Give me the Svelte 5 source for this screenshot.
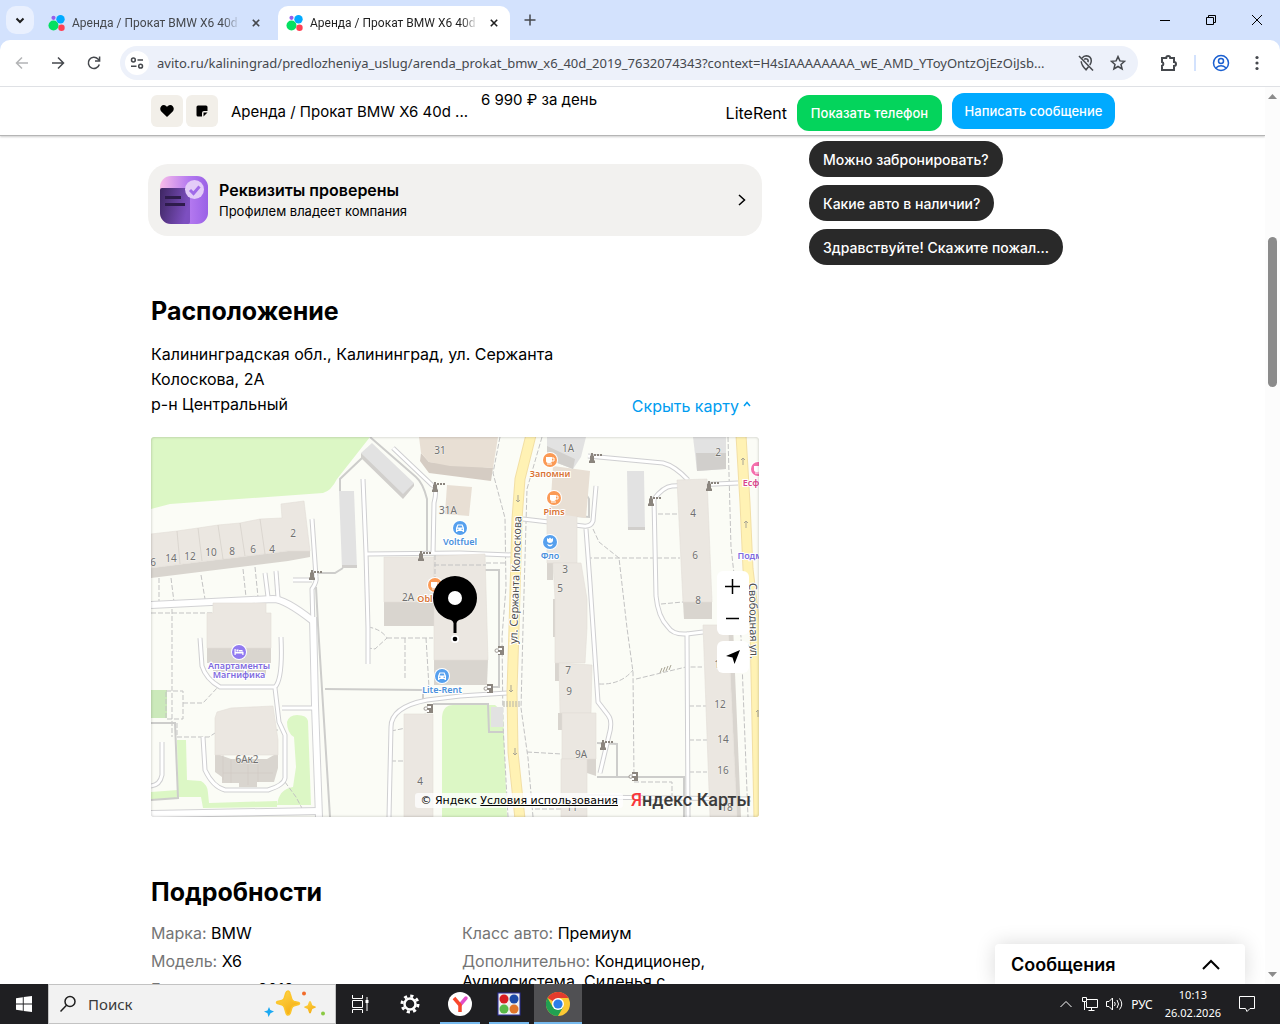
<script lang="ts">
  const tabs = [
    { title: "Аренда / Прокат BMW X6 40d", active: false },
    { title: "Аренда / Прокат BMW X6 40d", active: true },
  ];

  let address = $state(
    "avito.ru/kaliningrad/predlozheniya_uslug/arenda_prokat_bmw_x6_40d_2019_7632074343?context=H4sIAAAAAAAA_wE_AMD_YToyOntzOjEzOiJsb..."
  );

  const questions = ["Можно забронировать?", "Какие авто в наличии?", "Здравствуйте! Скажите пожал..."];

  const details = [
    [
      ["Марка", "BMW"],
      ["Модель", "X6"],
      ["Год выпуска", "2019"],
    ],
    [
      ["Класс авто", "Премиум"],
      ["Дополнительно", "Кондиционер, Аудиосистема, Сиденья с подогревом"],
    ],
  ];

  // All map data below is in the units of the map's viewBox (608 x 380).
  const greens = [
    "M0 0H219L186 42Q180 54 172 56L19 67L0 72Z",
    "M136 285Q138 278 146 278Q156 278 157 284L160 368H126Q128 352 142 350L145 330L143 300Q136 296 136 285Z",
    "M26 303H35L36 343L50 344Q57 348 57 356L58 366L126 364V370L52 371L50 360L28 360V362H0V355L27 353Z",
    "M291 380V280Q292 268 302 268H344L352 275L356 380Z",
  ];

  const roofs = [
    "M0 97L26 94L47 91L67 88L89 86L109 82L131 81L130 67L153 64L159 114H137L0 131Z",
    "M233 120H283V165H233Z",
    "M283 119L334 117L337 223H283Z",
    "M62 166H115V176H120V211H56V176H62Z",
    "M66 275L80 271L122 269L127 303V318H64V281Z",
    "M253 277H282V380H253Z",
    "M396 76H426V126H396Z",
    "M402 126H430L436 162V191L434 226H404V162Z",
    "M408 226L441 228L440 276H409Z",
    "M411 276H445V322H411Z",
    "M410 322H436V380H410Z",
    "M526 43L556 42L561 165H532Z",
    "M552 188H577L586 380H559Z",
  ];

  const walls = [
    "M0 131L137 114H159V120L137 124L0 141Z",
    "M233 165H283V189H233Z",
    "M283 223H337L336 248H283Z",
    "M56 199H62V211H113V199H120V226H115V238H62V226H56Z",
    "M64 303H69V318L80 322H116L123 318V303H127V331L123 345H106V350H88V346H71V340L64 335Z",
    "M396 126H402V143H396Z M402 162H405V200H402Z M404 226H408V244H404Z M407 276H411V293H407Z",
    "M436 322H445V339L436 336Z",
    "M532 165H561V182H533Z",
    "M577 188H582L590 380H586Z",
  ];

  const shops = [
    "M268 0H347L342 31L299 29L278 25L270 16Z",
    "M296 48L321 50L318 79L294 77Z",
    "M402 29L439 34L435 81L399 76Z",
  ];

  const sheds = [
    "M210 16L221 6L263 46L252 61Z",
    "M188 54H203L206 131H191Z",
    "M476 34H493L494 93H477Z",
    "M396 0H435L430 20L422 32L396 22Z",
    "M542 0H575V32L546 34Z",
    "M340 270H352V290H340Z",
  ];

  const lanes = [
    "M161 82L165 140Q166 145 161 152L162 191",
    "M212 42L215 116L217 191V227",
    "M216 117L309 116L361 118",
    "M242 11L281 48Q287 50 283 66L282 117",
    "M114 136L117 160",
    "M125 134L127 161",
    "M142 143H161",
    "M49 201L51 229Q55 242 69 250H124Q132 242 130 200",
    "M52 300L54 333Q62 350 74 353H117Q133 348 134 341V298L128 285L124 251",
    "M131 271H163",
    "M356 256L309 259L276 263Q240 270 240 290L238 380",
    "M11 305V338Q9 348 0 349",
    "M445 49L442 84Q440 90 432 89L372 82",
    "M435 92L439 146L447 265L457 278Q462 284 458 298L449 336",
    "M437 19L512 26Q524 29 537 43",
    "M503 62L505 159Q507 180 517 190Q522 198 536 197L537 380",
    "M503 62Q512 50 521 49L587 46",
    "M536 197L552 195",
    "M436 360L600 362",
  ];

  const mainLanes = ["M0 168L122 162Q134 162 162 184", "M162 180L164 268L168 380", "M0 377L168 374"];

  const fences = [
    "M219 0L265 40Q272 46 276 62V117",
    "M211 21L189 42V54",
    "M166 136H184L192 131",
    "M165 150L167 188L179 380",
    "M174 252L272 253V264",
    "M0 286H24L27 361L0 363",
    "M334 133H348V250H336",
    "M291 267H337L338 295H353",
    "M446 340H533V380",
    "M446 306L466 307V340",
    "M428 46L438 62V80L425 79",
    "M282 267H291",
  ];

  const footpaths = [
    "M349 0L342 36L354 81L355 150L351 200L352 288L357 380",
    "M391 0L376 52L372 191L370 271L377 321L382 380",
    "M442 92L448 105L468 121L476 191L482 235L483 341",
    "M436 121H529",
    "M507 77H526",
    "M510 167L532 165",
    "M448 247Q470 248 482 233",
    "M485 242L535 230H551",
    "M538 269H556M538 303H556M538 335H556",
    "M376 315L411 317",
    "M483 345H521V362",
    "M577 0L580 110L590 200L597 380",
    "M8 141V165M20 141L23 165M50 138L54 162M92 132L95 160M104 130L107 160",
    "M0 176H62M21 172V300",
    "M15 254H32V282H15ZM32 266H52L67 250",
    "M26 286V300H58L64 296L127 293",
    "M134 345L145 360L153 375",
    "M217 190Q230 192 236 201L224 212L217 211",
    "M236 201H282M254 201V242M275 201L278 250",
    "M240 294L260 290L276 275",
    "M240 324H252",
    "M300 126H354",
    "M384 372H412",
    "M60 178H115M100 166V190",
  ];

  const barriers = [
    [284, 50],
    [270, 119],
    [161, 138],
    [441, 21],
    [500, 64],
    [558, 49],
    [452, 308],
  ];

  const gates = [
    [278, 271],
    [349, 213],
    [338, 251],
    [483, 339],
  ];

  const houses = [
    ["31", 289, 17],
    ["31А", 297, 77],
    ["1А", 417, 15],
    ["2", 567, 19],
    ["2", 142, 100],
    ["4", 121, 116],
    ["6", 102, 116],
    ["8", 81, 118],
    ["10", 60, 119],
    ["12", 39, 123],
    ["14", 20, 125],
    ["6", 2, 129],
    ["2А", 257, 164],
    ["3", 414, 136],
    ["5", 409, 155],
    ["4", 542, 80],
    ["6", 544, 122],
    ["8", 547, 167],
    ["7", 417, 237],
    ["9", 418, 258],
    ["10", 569, 231],
    ["12", 569, 271],
    ["14", 572, 306],
    ["16", 572, 337],
    ["18", 576, 374],
    ["9А", 430, 321],
    ["11", 421, 374],
    ["4", 269, 348],
    ["6Ак2", 96, 326],
  ];

  const places = [
    { name: ["Запомни"], x: 399, y: 23, kind: "cup" },
    { name: ["Pims"], x: 403, y: 61, kind: "cup" },
    { name: ["Obl"], x: 284, y: 148, kind: "cup", textX: 274 },
    { name: ["Voltfuel"], x: 309, y: 91, kind: "car" },
    { name: ["Lite-Rent"], x: 291, y: 239, kind: "car" },
    { name: ["Фло"], x: 399, y: 105, kind: "flower" },
    { name: ["Апартаменты", "Магнифика"], x: 88, y: 215, kind: "bed" },
    { name: ["Есф"], x: 607, y: 32, kind: "beauty", textX: 600 },
  ];
</script>

{#snippet favicon()}
  <svg class="favicon" width="18" height="18" viewBox="0 0 18 18" aria-hidden="true">
    <circle cx="5.500" cy="11.500" r="5" fill="#04e061" />
    <circle cx="12.500" cy="5.200" r="4.200" fill="#00aaff" />
    <circle cx="13.500" cy="13.700" r="3.200" fill="#ff4053" />
    <circle cx="5.500" cy="3.800" r="2.100" fill="#965eeb" />
  </svg>
{/snippet}

<div class="screen">
  <div class="tabstrip">
    <button class="tab-search" aria-label="Поиск вкладок">
      <svg width="12" height="12" viewBox="0 0 12 12"><path d="M2.500 4.500L6 8l3.500-3.500" class="stroke thick" /></svg>
    </button>
    {#each tabs as tab}
      <div class="tab" class:active={tab.active}>
        {@render favicon()}
        <span class="tab-title">{tab.title}</span>
        <button class="close" aria-label="Закрыть">
          <svg width="10" height="10" viewBox="0 0 10 10"><path d="M1 1l8 8M9 1L1 9" class="stroke thick" /></svg>
        </button>
      </div>
    {/each}
    <button class="new-tab" aria-label="Новая вкладка">
      <svg width="12" height="12" viewBox="0 0 12 12"><path d="M6 .5v11M.5 6h11" class="stroke mid" /></svg>
    </button>
    <div class="window-buttons">
      <button aria-label="Свернуть"><svg width="10" height="10" viewBox="0 0 10 10"><path d="M0 5.500h10" class="stroke" /></svg></button>
      <button aria-label="Восстановить">
        <svg width="10" height="10" viewBox="0 0 10 10"><path d="M.5 2.500h7v7h-7zM2.500 2.500v-2h7v7h-2" class="stroke" /></svg>
      </button>
      <button aria-label="Закрыть окно"><svg width="10" height="10" viewBox="0 0 10 10"><path d="M0 0l10 10M10 0L0 10" class="stroke" /></svg></button>
    </div>
  </div>

  <div class="toolbar">
    <button class="nav faded" aria-label="Назад">
      <svg width="16" height="16" viewBox="0 0 16 16"><path d="M14 8H2.500M8 2.500L2.500 8 8 13.500" class="stroke mid" /></svg>
    </button>
    <button class="nav" aria-label="Вперёд">
      <svg width="16" height="16" viewBox="0 0 16 16"><path d="M2 8h11.500M8 2.500L13.500 8 8 13.500" class="stroke mid" /></svg>
    </button>
    <button class="nav" aria-label="Обновить">
      <svg width="16" height="16" viewBox="0 0 16 16">
        <path d="M13.300 9.500A5.600 5.600 0 1 1 12 4l1.400 1.600" class="stroke mid" />
        <path d="M13.600 1.500v4.600H9" class="stroke mid" />
      </svg>
    </button>
    <div class="omnibox">
      <button class="site" aria-label="Сведения о сайте">
        <svg width="14" height="14" viewBox="0 0 14 14">
          <circle cx="3.400" cy="4" r="1.900" class="stroke mid" /><path d="M7.500 4H13M1 10.200h5.500" class="stroke mid" />
          <circle cx="10.600" cy="10.200" r="1.900" class="stroke mid" />
        </svg>
      </button>
      <input class="address" type="text" aria-label="Адресная строка" bind:value={address} />
      <button class="in-box" aria-label="Геолокация заблокирована">
        <svg width="18" height="18" viewBox="0 0 18 18">
          <path d="M5 4.200Q6.700 1.700 9.300 1.700q5 .4 5 5.300-.1 2-1.500 4M4.200 7.300q.2 4 4.800 8.500l2.500-3" class="stroke mid" />
          <path d="M7.200 5.600a2.200 2.200 0 0 1 3.600 2.500" class="stroke mid" /><path d="M2 2l14 14.500" class="stroke mid" />
        </svg>
      </button>
      <button class="in-box" aria-label="Добавить в закладки">
        <svg width="16" height="16" viewBox="0 0 16 16">
          <path d="M8 1.600l1.900 4.300 4.700.4-3.600 3.100 1.100 4.600L8 11.500 3.900 14 5 9.400 1.400 6.300l4.700-.4z" class="stroke mid" />
        </svg>
      </button>
    </div>
    <div class="tools">
      <button aria-label="Расширения">
        <svg width="18" height="18" viewBox="0 0 18 18">
          <path d="M2 4h4.200a2 2 0 0 1 4 0H14v4a2 2 0 0 1 0 4v4H2v-4.200a2 2 0 0 0 0-3.800z" class="stroke thick" />
        </svg>
      </button>
      <span class="separator"></span>
      <button class="profile" aria-label="Профиль">
        <svg width="18" height="18" viewBox="0 0 18 18">
          <circle cx="9" cy="9" r="7.500" class="stroke mid" /><circle cx="9" cy="7" r="2.500" class="stroke mid" />
          <path d="M3.800 14q5.200-4.500 10.400 0" class="stroke mid" />
        </svg>
      </button>
      <button aria-label="Меню">
        <svg width="4" height="16" viewBox="0 0 4 16">
          <circle cx="2" cy="2.500" r="1.600" /><circle cx="2" cy="8" r="1.600" /><circle cx="2" cy="13.500" r="1.600" />
        </svg>
      </button>
    </div>
  </div>

  <div class="viewport">
    <div class="page">
      <header class="sticky">
        <div class="wrap bar">
          <button class="square" aria-label="В избранное">
            <svg width="14" height="12" viewBox="0 0 14 12"><path d="M7 12L1.300 6.500C-1 4 .7 0 3.800 0 5.400 0 6.500 1 7 2 7.500 1 8.600 0 10.200 0c3.100 0 4.800 4 2.500 6.500z" /></svg>
          </button>
          <button class="square" aria-label="Заметка">
            <svg width="12" height="12" viewBox="0 0 12 12"><path d="M2 .5h8A1.500 1.500 0 0 1 11.500 2v4H8a2 2 0 0 0-2 2v3.500H2A1.500 1.500 0 0 1 .5 10V2A1.500 1.500 0 0 1 2 .5zM7.500 11.500V7.500h4z" /></svg>
          </button>
          <span class="name">Аренда / Прокат BMW X6 40d ...</span>
          <span class="price">6 990 ₽ за день</span>
          <span class="seller">LiteRent</span>
          <button class="action phone">Показать телефон</button>
          <button class="action write">Написать сообщение</button>
        </div>
      </header>

      <div class="wrap columns">
        <main>
          <button class="verified">
            <svg width="48" height="48" viewBox="0 0 48 48" aria-hidden="true">
              <defs>
                <linearGradient id="back"><stop offset="0" stop-color="#f9bce9" /><stop offset=".6" stop-color="#b57af0" /><stop offset="1" stop-color="#9a61e6" /></linearGradient>
                <linearGradient id="front" x2="1" y2=".3"><stop offset="0" stop-color="#3d2661" /><stop offset="1" stop-color="#7d4fc0" /></linearGradient>
                <clipPath id="round"><rect width="48" height="48" rx="11" /></clipPath>
              </defs>
              <g clip-path="url(#round)">
                <rect width="48" height="48" fill="url(#back)" />
                <rect y="12" width="30" height="36" rx="2" fill="url(#front)" />
                <path d="M5 21.500h16M5 28.500h20" stroke="#2e1c4c" stroke-width="3" />
                <circle cx="34.500" cy="13.500" r="9.500" fill="#e3ccf8" />
                <path d="M30 14l3.500 3.500 6-7" fill="none" stroke="#a16be8" stroke-width="3" />
              </g>
            </svg>
            <span class="verified-text">
              <strong>Реквизиты проверены</strong>
              <small>Профилем владеет компания</small>
            </span>
            <svg width="8" height="12" viewBox="0 0 8 12" aria-hidden="true"><path d="M1 1l5.500 5L1 11" class="stroke mid" /></svg>
          </button>

          <section class="location">
            <h2>Расположение</h2>
            <div class="place">
              <address>Калининградская обл., Калининград, ул. Сержанта Колоскова, 2А<br />р-н Центральный</address>
              <a href="#map">
                Скрыть карту
                <svg width="8" height="6" viewBox="0 0 8 6" aria-hidden="true"><path d="M1 5l3-3.500L7 5" class="stroke mid" /></svg>
              </a>
            </div>

            <div class="map" id="map">
              <svg class="canvas" viewBox="0 0 608 380" role="img" aria-label="Карта">
                <rect width="608" height="380" fill="#fbfcf6" />
                {#each greens as d}<path {d} fill="#dcf7c5" />{/each}
                <rect y="253" width="16" height="28" fill="#cbe9ba" />
                {#each footpaths as d}<path {d} class="foot" />{/each}
                {#each fences as d}<path {d} class="fence" />{/each}
                {#each lanes as d}<path {d} class="lane edge" />{/each}
                {#each mainLanes as d}<path {d} class="wide edge" />{/each}
                {#each lanes as d}<path {d} class="lane" />{/each}
                {#each mainLanes as d}<path {d} class="wide" />{/each}

                <path d="M380 -2L369 42L366 82L363 191L361 255L362 315L369 382" class="street edge" />
                <path d="M590 -2L594 66L597 132L604 191L605 238L608 382" class="street edge" />
                <path d="M380 -2L369 42L366 82L363 191L361 255L362 315L369 382" class="street" />
                <path d="M590 -2L594 66L597 132L604 191L605 238L608 382" class="street" />
                <path d="M353 264v6M356 264v6M359 264v6M362 264v6M365 264v6M368 264v6" stroke="#b5b3a8" />
                <path d="M367 58v7l-2-2m2 2l2-2M360 248v7l-2-2m2 2l2-2M364 311v7l-2-2m2 2l2-2M592 28v-7l-2 2m2-2l2 2M595 91v-7l-2 2m2-2l2 2M607 280v-7l-2 2" class="arrow" />
                <path d="M509 236l2-5M512 235l2-5M515 234l2-5M518 233l2-5" class="arrow" />

                <path d="M270 16L278 25L342 31L340 44L278 36L269 24Z" fill="#d5ccc3" />
                {#each walls as d}<path {d} fill="#d9d5cf" />{/each}
                {#each roofs as d}<path {d} fill="#ebe7e1" stroke="#e2ddd6" stroke-width=".6" />{/each}
                {#each shops as d}<path {d} fill="#e8dfd4" />{/each}
                {#each sheds as d}<path {d} fill="#e2e2e2" />{/each}
                <path d="M210 16L252 57L263 46V49L252 62L210 21ZM191 128H206V131H191ZM477 90H494V93H477ZM545 16H575V32L546 34ZM396 9L424 22L422 32L396 22Z" fill="#d1cfcc" />
                <path d="M26 94L29 127M47 91L51 124M67 88L72 122M89 86L94 119M109 82L114 117M72 318V343M80 322V346M97 322V348M107 322V345M72 336H122" stroke="#d0cbc4" stroke-width=".6" fill="none" />
                <path d="M284 118v27M283 128H335" class="foot" />

                {#each barriers as [x, y]}
                  <path d="M{x - 3} {y + 5}v-2l1-1v-4l1-1v-2h2v2l1 1v4l1 1v2z" fill="#8b857e" />
                  <path d="M{x + 2} {y - 3}h9" stroke="#8b857e" stroke-width="2" stroke-dasharray="2 1" />
                {/each}
                {#each gates as [x, y]}
                  <path d="M{x - 2} {y - 4}h6v9h-6z" fill="#8b857e" />
                  <path d="M{x + 2} {y - 1}h-4q-2 0-2 2t3 2h1" fill="none" stroke="#fff" stroke-width="2" />
                  <path d="M{x - 1} {y - 1}h-3q-1 0-1 2t3 1" fill="none" stroke="#8b857e" stroke-width=".8" />
                {/each}

                {#each houses as [label, x, y]}<text {x} {y} class="house">{label}</text>{/each}

                <text class="street-name" transform="translate(366 207) rotate(-88)">ул. Сержанта Колоскова</text>
                <text class="street-name" transform="translate(598 146) rotate(89)">Свободная ул.</text>

                {#each places as p}
                  <g class={p.kind}>
                    <circle cx={p.x} cy={p.y} r="8" fill="#fff" /><circle cx={p.x} cy={p.y} r="7" class="dot" />
                    <g transform="translate({p.x} {p.y})" fill="#fff">
                      {#if p.kind == "car"}
                        <path d="M-4 0l1.500-3.500h5L4 0v4H2.500V3h-5v1H-4z" /><path d="M-2.500 -.5l.8-2h3.400l.8 2zM-3 .8h1.500v1H-3zM1.500 .8H3v1H1.500z" class="dot" />
                      {:else if p.kind == "flower"}
                        <path d="M-3 -4l1.500 1L0 -4.500 1.500 -3 3 -4V-1Q2.500 1 0 1T-3 -1zM-3 2L0 3 3 2Q2 4.500 0 4.500T-3 2z" />
                      {:else if p.kind == "bed"}
                        <path d="M-4.500 -3h1.200v3H4.500v3H3.300V1.500h-6.600V3h-1.200zM-2.500 -2.500h2v2h-2zM0 -2h3l1.500 1.500H0z" />
                      {:else}
                        <path d="M-4 -3h6v4q0 2-3 2t-3-2zM-3 3.500h5v1h-5z" /><path d="M2 -2h2v3H2" fill="none" stroke="#fff" />
                      {/if}
                    </g>
                    {#each p.name as line, i}
                      <text x={p.textX ?? p.x} y={p.y + 17 + i * 9} class="poi">{line}</text>
                    {/each}
                  </g>
                {/each}
                <g class="bed"><text x="599" y="122" class="poi">Подм</text></g>

                <circle cx="304" cy="202" r="4" fill="#fff" /><circle cx="304" cy="202" r="2.300" />
                <path d="M304 139a22 22 0 0 1 22 22c0 11-8 20-18 22q-2 1-2.500 3v10h-3v-10q-.5-2-2.500-3c-10-2-18-11-18-22a22 22 0 0 1 22-22z" />
                <circle cx="304" cy="161" r="7" fill="#fff" />
              </svg>

              <div class="map-controls">
                <div class="zoom">
                  <button aria-label="Приблизить"><svg width="16" height="16" viewBox="0 0 16 16"><path d="M7.500 0v15M0 7.500h15" class="stroke mid" /></svg></button>
                  <button aria-label="Отдалить"><svg width="16" height="16" viewBox="0 0 16 16"><path d="M1 7.500h13" class="stroke mid" /></svg></button>
                </div>
                <button class="locate" aria-label="Моё местоположение"><svg width="16" height="16" viewBox="0 0 16 16"><path d="M15 1L9.500 15 7.500 8.500 1 7z" /></svg></button>
              </div>
              <div class="legal">
                <span class="terms">© Яндекс <a href="#terms">Условия использования</a></span>
                <a class="brand" href="#maps"><span>Я</span>ндекс Карты</a>
              </div>
            </div>
          </section>

          <section class="details">
            <h2>Подробности</h2>
            <div class="lists">
              {#each details as list}
                <dl>
                  {#each list as [term, value]}
                    <div><dt>{term}:</dt> <dd>{value}</dd></div>
                  {/each}
                </dl>
              {/each}
            </div>
          </section>
        </main>

        <aside>
          {#each questions as q}
            <button class="chip">{q}</button>
          {/each}
        </aside>
      </div>

      <button class="messages">
        Сообщения
        <svg width="18" height="11" viewBox="0 0 18 11" aria-hidden="true"><path d="M1 10l8-8 8 8" class="stroke thick" /></svg>
      </button>
    </div>
    <div class="scrollbar">
      <svg width="9" height="5" viewBox="0 0 9 5"><path d="M0 5L4.500 0 9 5z" /></svg>
      <span class="thumb"></span>
      <svg class="down" width="9" height="5" viewBox="0 0 9 5"><path d="M0 0L4.500 5 9 0z" /></svg>
    </div>
  </div>

  <footer class="taskbar">
    <button class="start" aria-label="Пуск">
      <svg width="16" height="16" viewBox="0 0 16 16"><path d="M0 2.200L6.800 1.200V7.500H0zM7.700 1.100L16 0V7.500H7.700zM0 8.400H6.800V14.800L0 13.800zM7.700 8.400H16V16L7.700 14.900z" /></svg>
    </button>
    <label class="search">
      <svg width="18" height="18" viewBox="0 0 18 18" aria-hidden="true"><circle cx="11" cy="6.500" r="5" class="stroke mid" /><path d="M7.500 10.200L1.500 16.500" class="stroke mid" /></svg>
      <input type="text" placeholder="Поиск" aria-label="Поиск" />
      <svg width="62" height="28" viewBox="0 0 62 28" aria-hidden="true">
        <defs>
          <linearGradient id="gold" x2=".6" y2="1"><stop offset="0" stop-color="#ffd84d" /><stop offset="1" stop-color="#f5ae14" /></linearGradient>
        </defs>
        <path d="M24 1q1.500 0 2.200 3l1.500 5q.6 2 2.500 2.500l4.300 1q2 1 0 2l-4.300 1.200q-2 .6-2.500 2.500l-1.500 5Q25.500 25 24 25t-2.200-2.800l-1.500-5q-.6-2-2.500-2.500l-4.300-1.200q-2-1 0-2l4.300-1q2-.5 2.500-2.500l1.500-5Q22.500 1 24 1z" fill="url(#gold)" stroke="#fcc52c" stroke-width="1.500" stroke-linejoin="round" />
        <path d="M46 11q1 0 1.300 1.600l1 2.700 3 1.200q1.600.6 0 1.300l-3 1.200-1 2.700Q47 23.500 46 23.500t-1.300-1.800l-1-2.700-3-1.200q-1.600-.7 0-1.300l3-1.200 1-2.700Q45 11 46 11z" fill="url(#gold)" />
        <path d="M5 17l1.300 3L10 21.500 6.500 23.300 4.500 27 3.500 23.300 0 21.500 3.500 20.500z" fill="#1ca9f2" />
        <circle cx="40" cy="3.500" r="2" fill="#f26b2a" /><circle cx="59" cy="23.500" r="2" fill="#8ac943" />
      </svg>
    </label>
    <button class="app" aria-label="Представление задач">
      <svg width="18" height="18" viewBox="0 0 18 18"><path d="M1.500 0v3.500h10V0M1.500 18v-3.500h10V18M1.500 5.500h10v7h-10zM16 2v14" class="stroke" /><path d="M14.500 5h3v3h-3z" /></svg>
    </button>
    <button class="app" aria-label="Параметры">
      <svg width="20" height="20" viewBox="0 0 20 20">
        <circle cx="10" cy="10" r="5.500" fill="none" stroke="#fff" stroke-width="2.500" />
        <circle cx="10" cy="10" r="8" fill="none" stroke="#fff" stroke-width="3" stroke-dasharray="3.140 3.140" />
      </svg>
    </button>
    <button class="app open" aria-label="Яндекс Браузер">
      <svg width="24" height="24" viewBox="0 0 24 24">
        <circle cx="12" cy="12" r="12" fill="#fff" />
        <path d="M18 6l-6 7" fill="none" stroke="#e34fc8" stroke-width="3.500" stroke-linecap="round" />
        <path d="M6 6l6 7v7" fill="none" stroke="#f8472c" stroke-width="3.500" stroke-linejoin="round" />
      </svg>
    </button>
    <button class="app open" aria-label="Приложение">
      <svg width="24" height="24" viewBox="0 0 24 24">
        <rect x="1" y="1" width="22" height="22" fill="#eee" stroke="#2b2f9f" />
        <circle cx="7" cy="7" r="4.500" fill="#d81c22" /><circle cx="17" cy="7" r="4.500" fill="#1c4aa8" />
        <circle cx="7" cy="17" r="4.500" fill="#58b848" /><circle cx="17" cy="17" r="4.500" fill="#e0752b" />
      </svg>
    </button>
    <button class="app open current" aria-label="Google Chrome">
      <svg width="24" height="24" viewBox="0 0 24 24">
        <circle cx="12" cy="12" r="12" fill="#fcc934" />
        <path d="M12 12L1.600 6A12 12 0 0 1 22.400 6z" fill="#e33b2e" /><path d="M12 12l0 12A12 12 0 0 1 1.600 6l5.200 9z" fill="#21a052" /><path d="M12 24l5.200-9L12 12l-5.200 3z" fill="#21a052" />
        <path d="M12 6H22.400L17 15z" fill="#fcc934" />
        <circle cx="12" cy="12" r="6" fill="#fff" /><circle cx="12" cy="12" r="4.600" fill="#2b7de9" />
      </svg>
    </button>
    <div class="tray">
      <svg width="12" height="8" viewBox="0 0 12 8"><path d="M.5 7L6 1.500 11.500 7" class="stroke" /></svg>
      <svg width="16" height="14" viewBox="0 0 16 14"><path d="M5 2.500h10.500v8H4.500V5M9.500 10.500V13M6.500 13.500h6M.5 .5h4v4h-4zM2.500 4.500V13" class="stroke" /></svg>
      <svg width="17" height="14" viewBox="0 0 17 14"><path d="M.5 4.500H3L6.500 1v12L3 9.500H.5zM8.500 5q1.500 2 0 4M11 3q3 4 0 8M13.500 1.500q4.500 5.500 0 11" class="stroke" /></svg>
      <span>РУС</span>
      <time datetime="2026-02-26T10:13">10:13<br />26.02.2026</time>
      <svg width="16" height="16" viewBox="0 0 16 16"><path d="M.5 .5h15v12H11L8 15.500l-1.500-3h-6z" class="stroke" /></svg>
    </div>
  </footer>
</div>

<style>
  :global(body) {
    margin: 0;
  }

  .screen {
    display: flex;
    flex-direction: column;
    height: 100vh;
    overflow: hidden;
    background: #d3e2fd;
    font-family: "Inter", "Open Sans", sans-serif;
    color: #000;
  }

  button {
    display: flex;
    align-items: center;
    justify-content: center;
    margin: 0;
    padding: 0;
    border: 0;
    background: none;
    color: inherit;
    font: inherit;
    cursor: pointer;
  }

  svg {
    display: block;
    flex: none;
    fill: currentColor;
  }

  .stroke {
    fill: none;
    stroke: currentColor;
    stroke-width: 1;
  }

  .mid {
    stroke-width: 1.5;
  }

  .thick {
    stroke-width: 2;
  }

  /* browser chrome */
  .tabstrip {
    display: flex;
    align-items: center;
    height: 40px;
    flex: none;
    padding-left: 6px;
    color: #1f1f1f;
    font: 12px "Roboto", sans-serif;
  }

  .tab-search {
    width: 28px;
    height: 28px;
    border-radius: 10px;
    background: #e9f0fe;
  }

  .tab {
    display: flex;
    align-items: center;
    align-self: flex-end;
    box-sizing: border-box;
    width: 232px;
    height: 34px;
    margin-left: 6px;
    padding: 0 8px;
    border-radius: 10px 10px 0 0;
    color: #45484d;
  }

  .tab.active {
    background: #fff;
    color: #1f1f1f;
  }

  .tab-title {
    flex: 1;
    min-width: 0;
    margin-left: 6px;
    overflow: hidden;
    white-space: nowrap;
    mask-image: linear-gradient(90deg, #000 90%, transparent);
  }

  .close {
    width: 16px;
    height: 16px;
    margin-left: 8px;
  }

  .close svg {
    width: 8px;
    height: 8px;
  }

  .new-tab {
    width: 28px;
    height: 28px;
    margin-left: 6px;
    color: #45484d;
  }

  .window-buttons {
    display: flex;
    height: 40px;
    margin-left: auto;
    color: #000;
  }

  .window-buttons button {
    width: 46px;
  }

  .toolbar {
    display: flex;
    align-items: center;
    box-sizing: border-box;
    height: 47px;
    flex: none;
    padding: 0 6px 0 4px;
    border-bottom: 1px solid #dfe1e5;
    border-radius: 10px 10px 0 0;
    background: #fff;
    color: #45484d;
  }

  .nav {
    width: 36px;
    height: 34px;
  }

  .faded {
    color: #b3b4b6;
  }

  .omnibox {
    display: flex;
    align-items: center;
    flex: 1;
    height: 34px;
    margin-left: 8px;
    padding: 0 4px 0 5px;
    border-radius: 17px;
    background: #edf1fa;
  }

  .site {
    width: 24px;
    height: 24px;
    border-radius: 50%;
    background: #fff;
  }

  .address {
    flex: 1;
    min-width: 0;
    margin: 0 0 0 8px;
    padding: 0;
    border: 0;
    outline: 0;
    background: none;
    color: #45484d;
    font: 13px "Noto Sans", sans-serif;
  }

  .in-box {
    width: 32px;
    height: 32px;
  }

  .tools {
    display: flex;
    align-items: center;
    gap: 8px;
    padding-left: 14px;
  }

  .tools button {
    width: 34px;
    height: 34px;
  }

  .separator {
    width: 2px;
    height: 16px;
    background: #d3e2fd;
  }

  .tools .profile {
    color: #1a5fd0;
  }

  .tools .profile + button {
    margin-left: -6px;
  }

  /* page */
  .viewport {
    display: flex;
    flex: 1;
    min-height: 0;
    background: #fff;
  }

  .page {
    position: relative;
    flex: 1;
    min-width: 0;
    overflow: hidden;
    font-size: 16px;
  }

  .wrap {
    max-width: 969px;
    margin: 0 auto;
  }

  .sticky {
    height: 48px;
    border-bottom: 1px solid #b5b5b5;
    box-shadow: 0 1px 2px rgba(0, 0, 0, 0.2);
  }

  .bar {
    display: flex;
    align-items: flex-start;
    padding: 0 2px 0 3px;
    box-sizing: border-box;
  }

  .square {
    width: 32px;
    height: 32px;
    margin: 8px 3px 0 0;
    border-radius: 6px;
    background: #f2efe9;
  }

  .bar span {
    line-height: 20px;
    white-space: nowrap;
  }

  .name {
    width: 240px;
    margin: 15px 0 0 10px;
    font-size: 15px;
  }

  .price {
    margin: 3px 0 0 10px;
    font-size: 15px;
  }

  .seller {
    margin: 16px 10px 0 auto;
  }

  .action {
    height: 36px;
    border-radius: 12px;
    color: #fff;
    font-size: 13px;
    font-weight: 500;
    white-space: nowrap;
  }

  .phone {
    width: 145px;
    margin: 8px 10px 0 0;
    background: #04d45c;
  }

  .write {
    width: 163px;
    margin: 6px 0 0;
    background: #00aaff;
  }

  .columns {
    display: flex;
    gap: 47px;
  }

  main {
    flex: none;
    width: 614px;
    padding-top: 28px;
  }

  aside {
    display: flex;
    flex-direction: column;
    align-items: flex-start;
    gap: 8px;
    padding-top: 5px;
  }

  .chip {
    height: 36px;
    padding: 0 14px;
    border-radius: 18px;
    background: #292929;
    color: #fff;
    font-size: 14px;
    font-weight: 500;
    white-space: nowrap;
  }

  .verified {
    width: 100%;
    height: 72px;
    padding: 0 16px 0 12px;
    border-radius: 20px;
    background: #f2f1ef;
    text-align: left;
  }

  .verified-text {
    display: flex;
    flex: 1;
    flex-direction: column;
    padding-left: 11px;
  }

  .verified strong {
    font-size: 16px;
    line-height: 22px;
    font-weight: 600;
  }

  .verified small {
    font-size: 13px;
    line-height: 20px;
  }

  section {
    padding: 0 3px;
  }

  h2 {
    margin: 0;
    font-size: 25px;
    line-height: 32px;
    font-weight: 700;
  }

  .location {
    margin-top: 59px;
  }

  .place {
    display: flex;
    align-items: flex-end;
    justify-content: space-between;
    margin-top: 15px;
    padding-right: 8px;
  }

  address {
    max-width: 430px;
    font-style: normal;
    line-height: 25px;
  }

  .place a {
    display: flex;
    gap: 4px;
    color: #009cf0;
    line-height: 22px;
    text-decoration: none;
  }

  .place a svg {
    margin-top: 6px;
  }

  .map {
    position: relative;
    margin-top: 20px;
    border-radius: 3px;
    overflow: hidden;
  }

  .map::after {
    content: "";
    position: absolute;
    inset: 0;
    border-radius: 3px;
    box-shadow: inset 0 0 3px rgba(0, 0, 0, 0.25);
    pointer-events: none;
  }

  .canvas {
    width: 100%;
    height: auto;
    fill: #000;
  }

  .canvas path.foot {
    fill: none;
    stroke: #c3c3c3;
    stroke-dasharray: 5 2;
  }

  .canvas path.fence {
    fill: none;
    stroke: #cdcdcb;
    stroke-width: 2;
  }

  .canvas path.arrow {
    fill: none;
    stroke: #a9a595;
  }

  .lane,
  .wide,
  .street {
    fill: none;
    stroke: #fff;
    stroke-width: 3;
    stroke-linejoin: round;
  }

  .lane.edge {
    stroke: #cfcfd1;
    stroke-width: 5;
  }

  .wide {
    stroke-width: 6;
  }

  .wide.edge {
    stroke: #d2d2d4;
    stroke-width: 8;
  }

  .street {
    stroke: #fff2b4;
    stroke-width: 9;
  }

  .street.edge {
    stroke: #f2dfa5;
    stroke-width: 11;
  }

  .house,
  .poi {
    font: 10px "Noto Sans", sans-serif;
    fill: #707070;
    text-anchor: middle;
    paint-order: stroke;
    stroke: #f4f2ee;
    stroke-width: 1;
  }

  .poi {
    font-size: 9px;
    font-weight: 600;
    stroke: #fff;
    stroke-width: 2;
  }

  .cup .dot {
    fill: #fb9a55;
  }

  .cup .poi {
    fill: #d97434;
  }

  .car .dot,
  .flower .dot {
    fill: #56a0ee;
  }

  .car .poi,
  .flower .poi {
    fill: #4a90dc;
  }

  .bed .dot {
    fill: #917af0;
  }

  .bed .poi {
    fill: #806be0;
  }

  .beauty .dot {
    fill: #f56fac;
  }

  .beauty .poi {
    fill: #d9448b;
  }

  .street-name {
    font: 11px "Noto Sans", sans-serif;
    fill: #4f4f4f;
    paint-order: stroke;
    stroke: #fff;
    stroke-width: 2;
  }

  .map-controls {
    position: absolute;
    top: 134px;
    right: 10px;
    display: flex;
    flex-direction: column;
    gap: 6px;
  }

  .zoom,
  .locate {
    border-radius: 6px;
    background: #fff;
  }

  .map-controls button {
    width: 32px;
    height: 32px;
  }

  .legal {
    position: absolute;
    right: 8px;
    bottom: 5px;
    display: flex;
    align-items: center;
    gap: 8px;
    white-space: nowrap;
  }

  .terms {
    padding: 0 5px;
    border-radius: 3px;
    background: rgba(255, 255, 255, 0.75);
    font: 11px/15px "DejaVu Sans", sans-serif;
  }

  .legal a {
    color: inherit;
  }

  .legal .brand {
    color: #3b3b3b;
    font: 500 18px/24px "Roboto", sans-serif;
    text-decoration: none;
  }

  .brand span {
    color: #f8363b;
  }

  .details {
    margin-top: 59px;
  }

  .lists {
    display: flex;
    margin-top: 15px;
  }

  dl {
    width: 270px;
    margin: 0;
    line-height: 20px;
  }

  dl + dl {
    margin-left: 41px;
  }

  dl div {
    margin-bottom: 8px;
  }

  dt,
  dd {
    display: inline;
    margin: 0;
  }

  dt {
    color: #757575;
  }

  .messages {
    position: absolute;
    right: 20px;
    bottom: 0;
    justify-content: space-between;
    width: 250px;
    height: 40px;
    padding: 0 25px 0 16px;
    border-radius: 4px 4px 0 0;
    background: #fff;
    box-shadow: 0 0 20px rgba(0, 0, 0, 0.15);
    font-size: 18px;
    font-weight: 600;
  }

  .scrollbar {
    display: flex;
    flex-direction: column;
    align-items: center;
    box-sizing: border-box;
    width: 15px;
    padding: 7px 0;
    background: #fcfcfc;
    color: #8b8b8b;
  }

  .thumb {
    width: 9px;
    height: 17%;
    margin-top: 138px;
    border-radius: 5px;
    background: #8b8b8b;
  }

  .scrollbar .down {
    margin-top: auto;
  }

  /* taskbar */
  .taskbar {
    display: flex;
    height: 40px;
    flex: none;
    background: #1f1f22;
    color: #fff;
    font: 11px "Noto Sans", sans-serif;
  }

  .start {
    width: 48px;
  }

  .search {
    display: flex;
    align-items: center;
    box-sizing: border-box;
    width: 288px;
    padding: 0 9px 0 10px;
    border: 1px solid #c3c3c3;
    background: #f2f2f2;
    color: #1f1f1f;
  }

  .search input {
    flex: 1;
    min-width: 0;
    margin: 0 0 0 11px;
    padding: 0;
    border: 0;
    outline: 0;
    background: none;
    font: 15px "Noto Sans", sans-serif;
  }

  .search input::placeholder {
    color: #3a3a3a;
    opacity: 1;
  }

  .app {
    box-sizing: border-box;
    width: 48px;
    margin-right: 2px;
  }

  .open {
    width: 40px;
    margin: 0 5px 0 4px;
    border-top: 2px solid transparent;
    border-bottom: 2px solid #76b9ed;
  }

  .current {
    width: 48px;
    margin: 0;
    background: #505053;
  }

  .current.open {
    border-top-color: #505053;
  }

  .tray {
    display: flex;
    align-items: center;
    gap: 8px;
    margin-left: auto;
    padding-right: 25px;
  }

  .tray > :first-child {
    margin-right: 2px;
  }

  .tray span {
    font-size: 12px;
  }

  .tray time {
    margin: 0 8px 0 4px;
    line-height: 18px;
    text-align: center;
  }

  .tray time + svg {
    margin-left: 2px;
  }
</style>
